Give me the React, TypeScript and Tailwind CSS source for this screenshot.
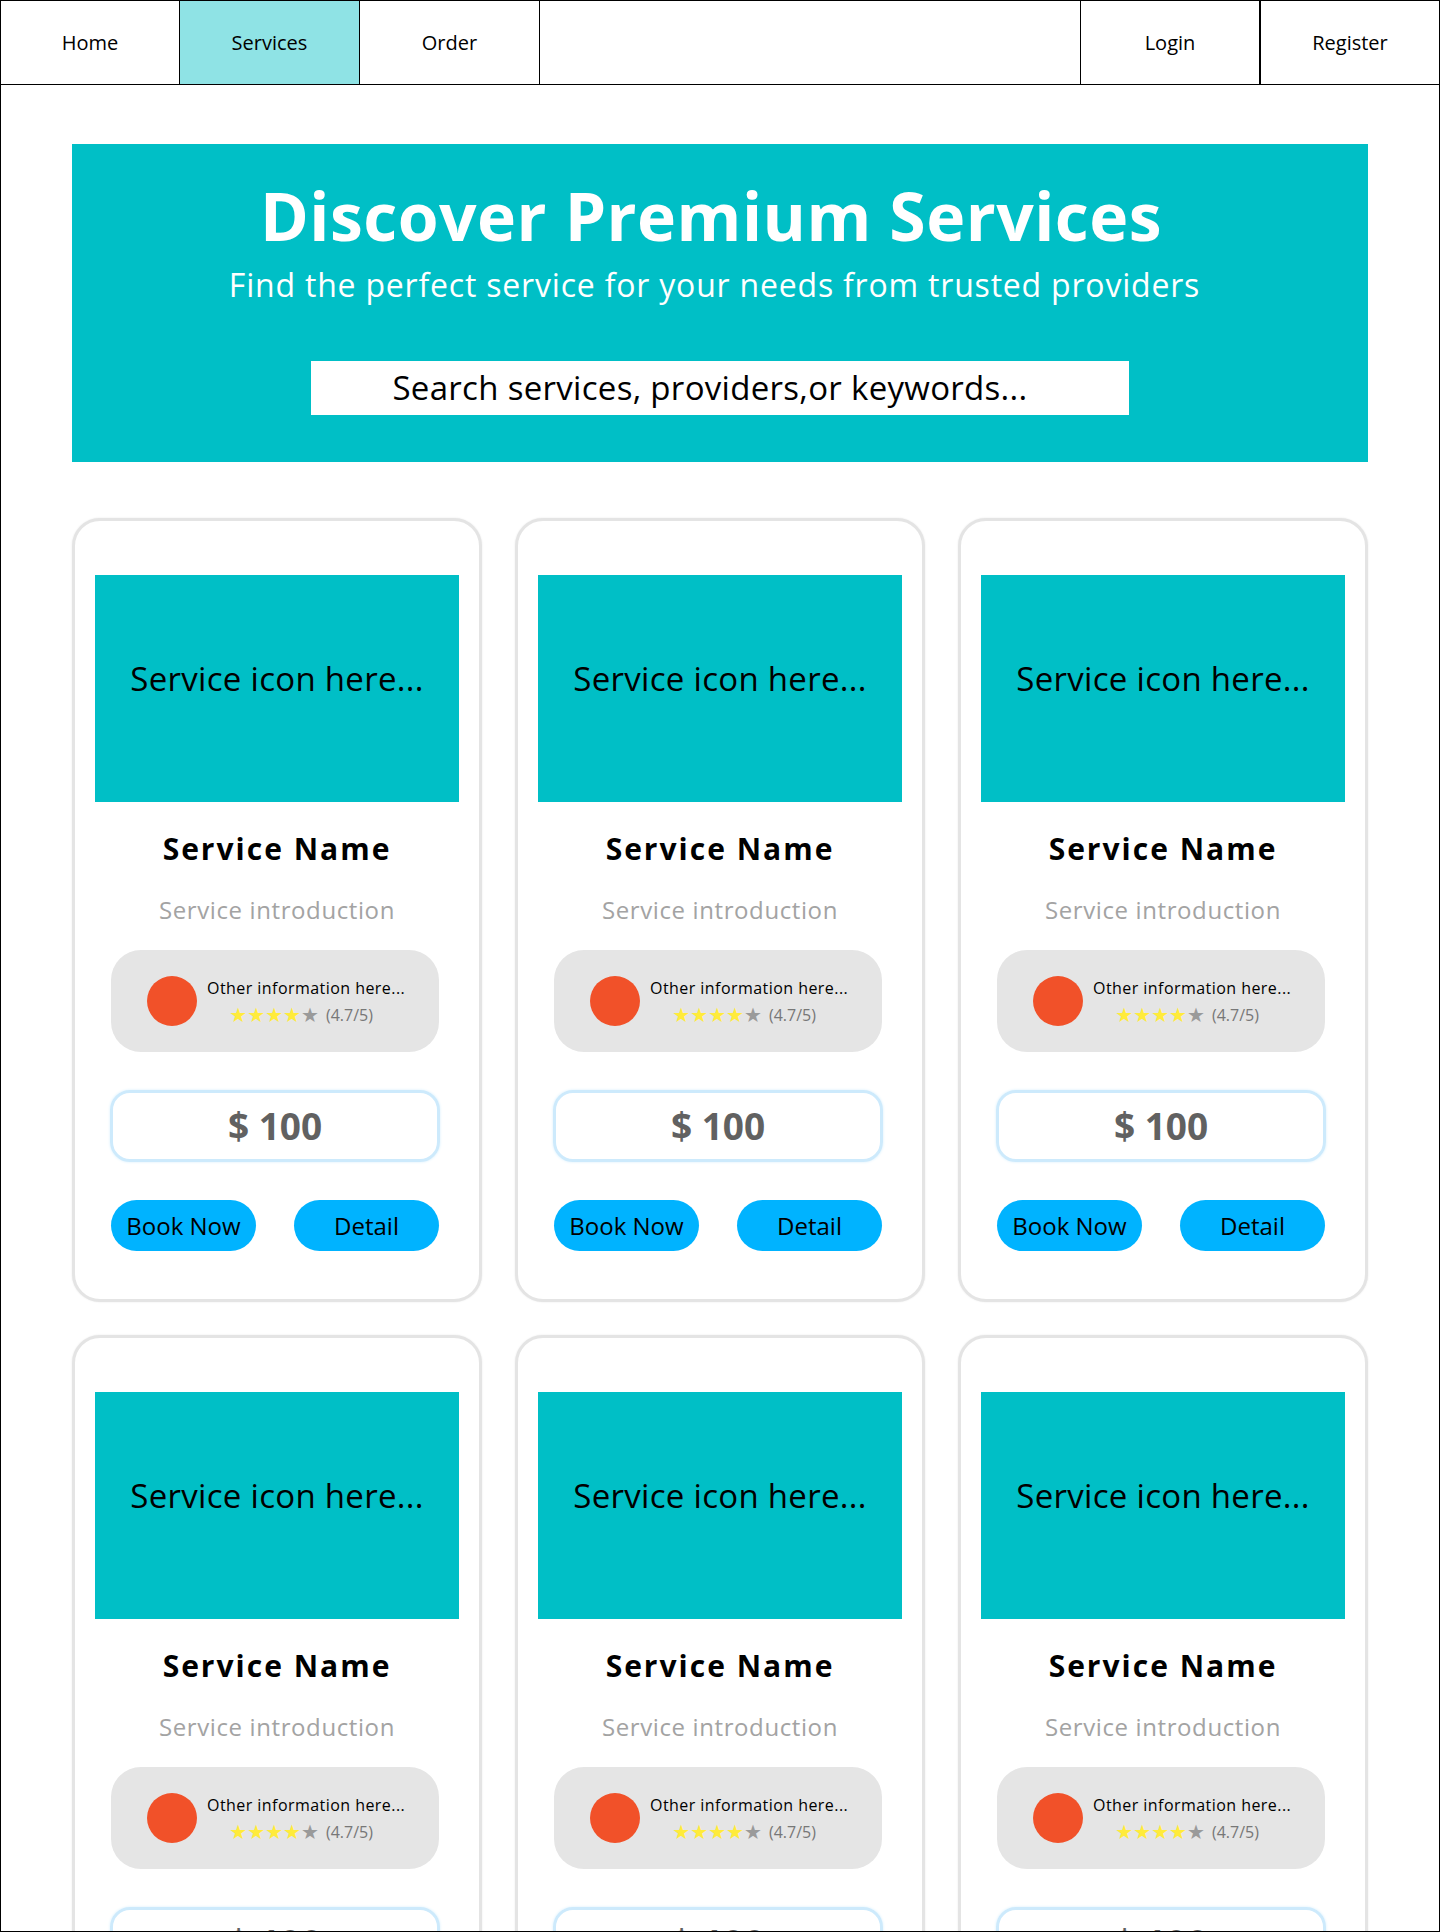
import React from "react";

const font = { fontFamily: '"Open Sans", "Noto Sans", sans-serif' };

function Card() {
  return (
    <div className="h-[784px] rounded-[28px] border-[3px] border-[#e4e4e4] bg-white flex flex-col items-center pt-[54px] shadow-[0_0_2px_rgba(0,0,0,0.1)]">
      <div className="w-[364px] h-[227px] bg-[#00bfc6] flex items-center justify-center pb-[20px]">
        <span className="text-[33px] leading-[40px] text-black tracking-[0.3px]">Service icon here...</span>
      </div>
      <div className="mt-[27px] text-[30px] leading-[40px] font-bold text-black tracking-[2px]">Service Name</div>
      <div className="mt-[25px] text-[24px] leading-[32px] text-[#a3a3a3] tracking-[0.6px]">Service introduction</div>
      <div className="mt-[24px] w-[328px] h-[102px] rounded-[30px] bg-[#e5e5e5] flex items-center self-start ml-[36px]">
        <div className="ml-[36px] w-[50px] h-[50px] rounded-full bg-[#f15129]" />
        <div className="ml-[10px] flex flex-col items-center">
          <div className="text-[16px] leading-[22px] text-black tracking-[0.45px]">Other information here...</div>
          <div className="mt-[6px] flex items-center pr-[10px]">
            <span className="text-[20px] leading-[20px] text-[#ffeb3b]" style={{ fontFamily: '"DejaVu Sans", sans-serif' }}>★★★★</span>
            <span className="text-[20px] leading-[20px] text-[#9a9a9a]" style={{ fontFamily: '"DejaVu Sans", sans-serif' }}>★</span>
            <span className="ml-[7px] text-[16px] leading-[20px] text-[#777777]">(4.7/5)</span>
          </div>
        </div>
      </div>
      <div className="mt-[38px] w-[330px] h-[72px] rounded-[20px] border-[3px] border-[#cdeafc] shadow-[0_0_3px_#d6effd] flex items-center justify-center self-start ml-[35px]">
        <span className="text-[37px] leading-[44px] font-bold text-[#616161]">$ 100</span>
      </div>
      <div className="mt-[38px] w-[328px] flex justify-between self-start ml-[36px]">
        <button className="w-[145px] h-[51px] rounded-full bg-[#00b3ff] text-[24px] text-black leading-[32px]">Book Now</button>
        <button className="w-[145px] h-[51px] rounded-full bg-[#00b3ff] text-[24px] text-black leading-[32px]">Detail</button>
      </div>
    </div>
  );
}

export default function App() {
  return (
    <div className="w-[1440px] h-[1932px] border border-black bg-white overflow-hidden" style={font}>
      <nav className="h-[84px] flex border-b border-black">
        <div className="w-[179px] border-r border-black flex items-center justify-center text-[20px] text-black">Home</div>
        <div className="w-[180px] border-r border-black bg-[#8fe3e5] flex items-center justify-center text-[20px] text-black">Services</div>
        <div className="w-[180px] border-r border-black flex items-center justify-center text-[20px] text-black">Order</div>
        <div className="flex-1 border-r border-black" />
        <div className="w-[180px] border-r-2 border-black flex items-center justify-center text-[20px] text-black">Login</div>
        <div className="w-[178px] flex items-center justify-center text-[20px] text-black">Register</div>
      </nav>
      <main className="px-[71px] pt-[59px]">
        <section className="h-[318px] bg-[#00bfc6] flex flex-col items-center pt-[31px]">
          <h1 className="pr-[18px] text-[66px] leading-[80px] font-bold text-white tracking-[0.5px]">Discover Premium Services</h1>
          <p className="mt-[10px] pr-[11px] text-[32px] leading-[40px] text-white tracking-[0.8px]">Find the perfect service for your needs from trusted providers</p>
          <div className="mt-[56px] w-[818px] h-[54px] bg-white flex items-center justify-center pr-[20px]">
            <span className="text-[33px] leading-[40px] text-black tracking-[0.3px]">Search services, providers,or keywords...</span>
          </div>
        </section>
        <div className="mt-[56px] grid grid-cols-3 gap-[33px]">
          {Array.from({ length: 6 }).map((_, i) => (
            <Card key={i} />
          ))}
        </div>
      </main>
    </div>
  );
}
